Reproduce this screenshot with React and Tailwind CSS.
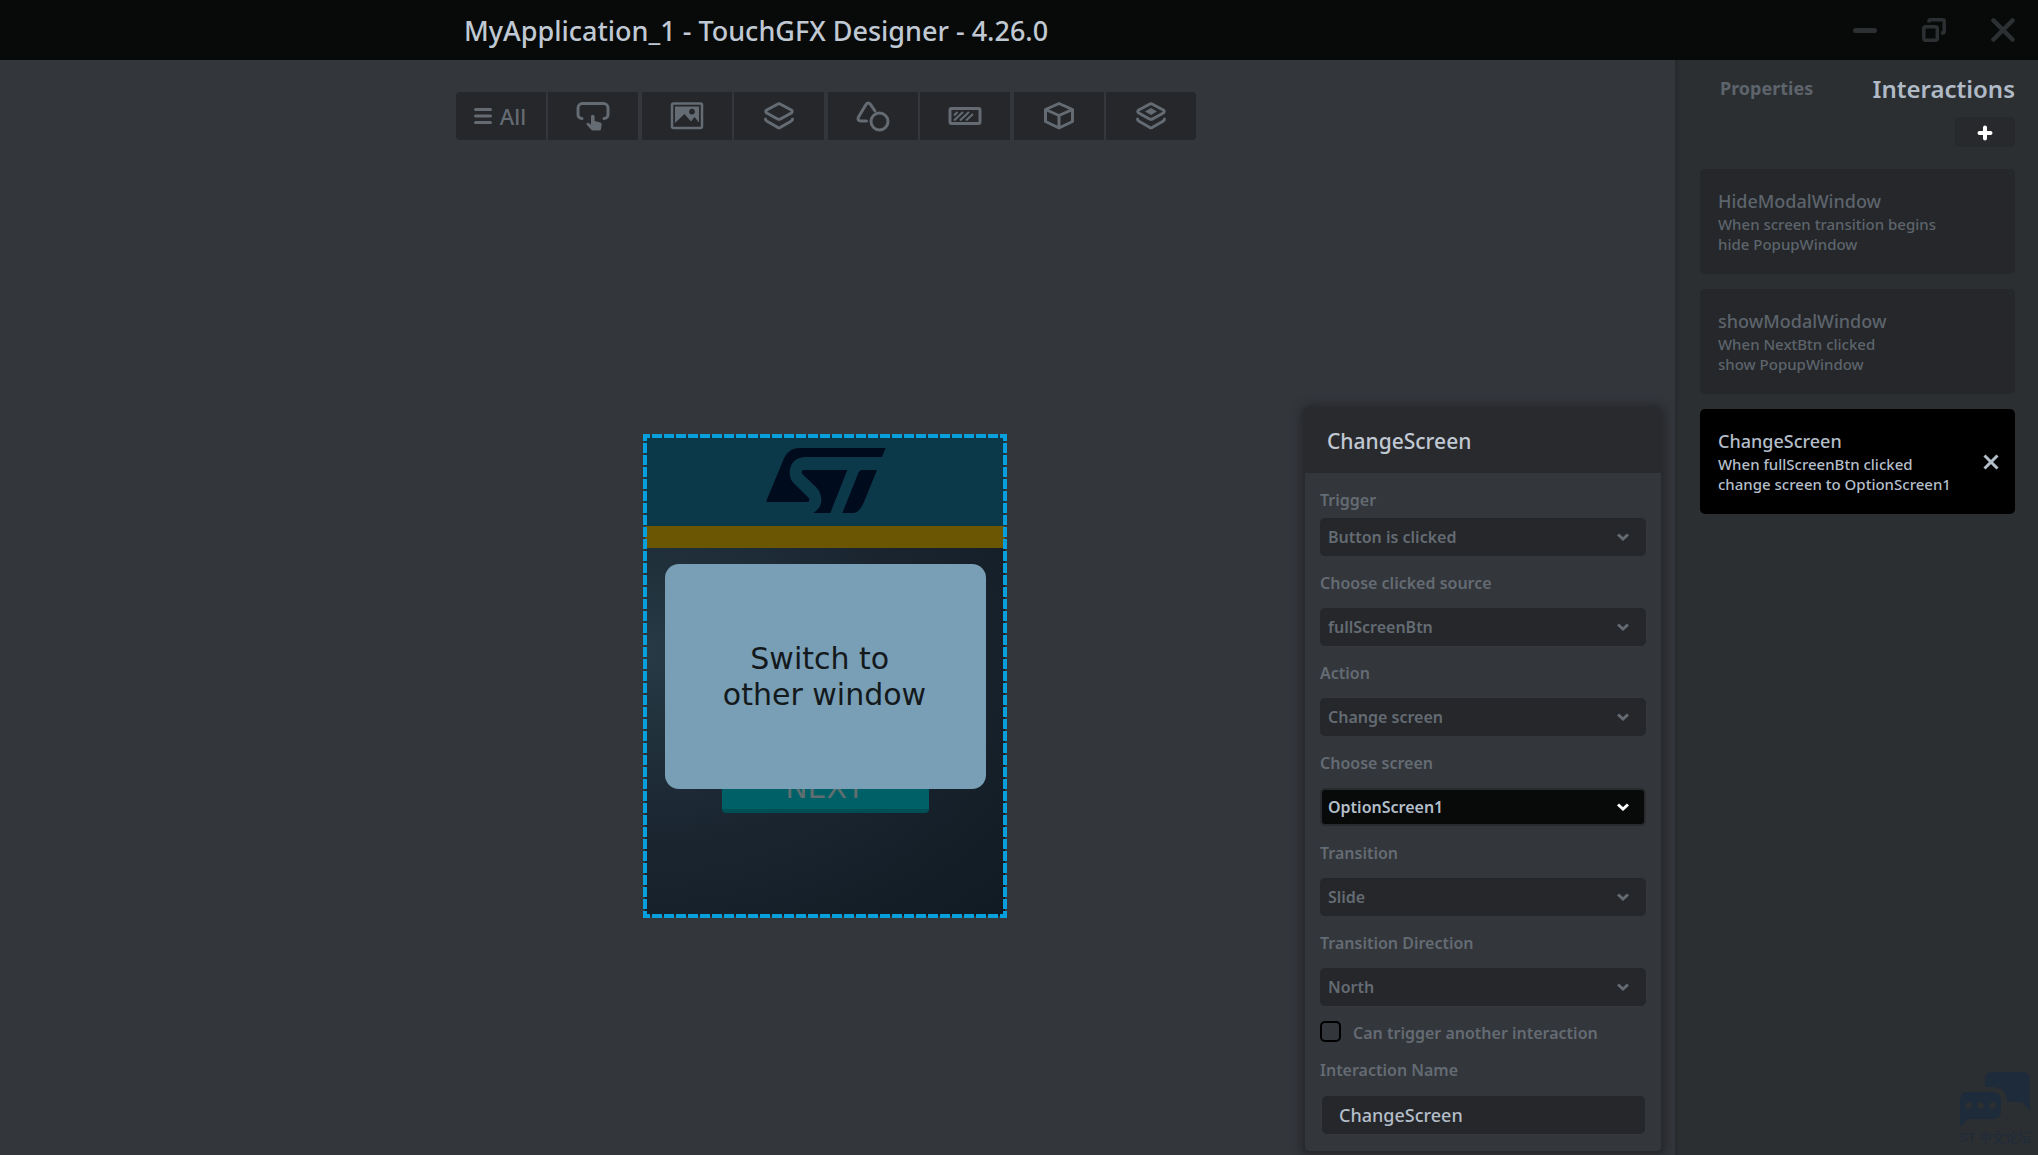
import React, { useState } from "react";

const icons = {
  touch: (
    <svg viewBox="0 0 36 32" className="h-8 w-9" fill="none" stroke="currentColor" strokeWidth="3" strokeLinecap="round">
      <path d="M7 18.500C4.500 18.500 3 16.500 3 14.500V8a4.500 4.500 0 0 1 4.500-4.500h21A4.500 4.500 0 0 1 33 8v6.500c0 2-1.500 4-4 4" />
      <path
        fill="currentColor"
        stroke="none"
        d="M16 16.500a1.800 1.800 0 0 1 3.600 0v4.500l5.600 1.600a2 2 0 0 1 1.500 2.200L26 29a1.800 1.800 0 0 1-1.800 1.500h-6.500a2 2 0 0 1-1.500-.7l-4.500-5.100c-.8-1.200.6-2.500 1.800-1.800l2.500 1.600z"
      />
    </svg>
  ),
  image: (
    <svg viewBox="0 0 36 32" className="h-8 w-9" fill="none" stroke="currentColor" strokeWidth="2.500">
      <rect x="3" y="3.500" width="30" height="24.500" rx="1.500" />
      <path fill="currentColor" stroke="none" fillRule="evenodd" d="M6 6.500h24v16l-4.500-5.500-3.500 4.500-6.500-7.500-9.500 9zM23 8.800a2.900 2.900 0 1 0 .01 0z" />
    </svg>
  ),
  layers: (
    <svg viewBox="0 0 36 32" className="h-8 w-9" fill="none" stroke="currentColor" strokeWidth="3" strokeLinejoin="round" strokeLinecap="round">
      <path d="m16.500 4.200-10.800 5.800q-1.800 1.500 0 3l10.800 6q1.500.7 3 0l10.800-6q1.800-1.500 0-3l-10.800-5.800q-1.500-.7-3 0z" />
      <path d="M4.500 19q0 1.500 1.500 2.300l10.500 6q1.500.7 3 0l10.500-6q1.500-.8 1.500-2.300" />
    </svg>
  ),
  shapes: (
    <svg viewBox="0 0 36 32" className="h-8 w-9" fill="none" stroke="currentColor" strokeWidth="3" strokeLinecap="round">
      <path d="M11.500 21H5.500q-3.500-.5-2-4L11 4.500q2-3 4.500 0l4.500 6.500" />
      <circle cx="24.500" cy="21.500" r="8.500" />
    </svg>
  ),
  progress: (
    <svg viewBox="0 0 36 32" className="h-8 w-9" fill="none" stroke="currentColor" strokeWidth="3">
      <rect x="3" y="8.500" width="30" height="15" rx="1.500" />
      <path strokeWidth="2" d="M7 15.500 10.500 12M7 20.500l9-8.500M13 20.500l9-8.500M19 20.500l7-6.500" />
    </svg>
  ),
  cube: (
    <svg viewBox="0 0 36 32" className="h-8 w-9" fill="none" stroke="currentColor" strokeWidth="3" strokeLinejoin="round">
      <path d="M18 3.500 31.500 9.500v12L18 28 4.500 21.500v-12zM4.500 9.500 18 15.500l13.500-6M18 15.500V28" />
    </svg>
  ),
  stack: (
    <svg viewBox="0 0 36 32" className="h-8 w-9" fill="none" stroke="currentColor" strokeWidth="3" strokeLinejoin="round" strokeLinecap="round">
      <path d="m16.500 4.200-10.800 5.800q-1.800 1.500 0 3l10.800 6q1.500.7 3 0l10.800-6q1.800-1.500 0-3l-10.800-5.800q-1.500-.7-3 0z" />
      <path d="M4.500 19q0 1.500 1.500 2.300l10.500 6q1.500.7 3 0l10.500-6q1.500-.8 1.500-2.300" />
      <path fill="currentColor" stroke="none" d="m18 8 6 3.500-6 3.500-6-3.500z" />
    </svg>
  ),
};

const toolGroups = [
  [{ id: "all", label: "All widgets" }, { id: "touch", label: "Buttons" }],
  [{ id: "image", label: "Images" }, { id: "layers", label: "Containers" }],
  [{ id: "shapes", label: "Shapes" }, { id: "progress", label: "Progress" }],
  [{ id: "cube", label: "Miscellaneous" }, { id: "stack", label: "Custom containers" }],
];

const interactions = [
  { name: "HideModalWindow", when: "When screen transition begins", then: "hide PopupWindow" },
  { name: "showModalWindow", when: "When NextBtn clicked", then: "show PopupWindow" },
  { name: "ChangeScreen", when: "When fullScreenBtn clicked", then: "change screen to OptionScreen1" },
];

const fields = [
  { id: "source", label: "Choose clicked source", value: "fullScreenBtn" },
  { id: "action", label: "Action", value: "Change screen" },
  { id: "screen", label: "Choose screen", value: "OptionScreen1", active: true },
  { id: "transition", label: "Transition", value: "Slide" },
  { id: "direction", label: "Transition Direction", value: "North" },
];

function TitleBar() {
  return (
    <header className="flex h-[60px] items-center justify-between bg-[#070a09] pt-0.5 pl-[464px] pr-[23px]">
      <h1 className="text-[27px] leading-9 font-medium text-[#c0c9d3]">
        MyApplication_1 - TouchGFX Designer - 4.26.0
      </h1>
      <div className="flex items-center gap-[45px] pb-0.5 text-[#2d3033]">
        <button aria-label="Minimize">
          <svg viewBox="0 0 24 24" className="size-6" stroke="currentColor" strokeWidth="5" strokeLinecap="round">
            <path d="M2.500 12.500h19" />
          </svg>
        </button>
        <button aria-label="Restore">
          <svg viewBox="0 0 24 24" className="size-6" fill="none" stroke="currentColor" strokeWidth="3.500">
            <rect x="1.800" y="8.800" width="13.500" height="13.500" rx="2" />
            <path d="M7 4.500V3.500q0-1.700 1.700-1.700h11.800q1.700 0 1.700 1.700v9.800q0 1.700-1.700 1.700H19" />
          </svg>
        </button>
        <button aria-label="Close">
          <svg viewBox="0 0 24 24" className="size-6" stroke="currentColor" strokeWidth="4.500" strokeLinecap="round">
            <path d="m2.500 2.500 19 19m0-19-19 19" />
          </svg>
        </button>
      </div>
    </header>
  );
}

function Toolbar() {
  return (
    <div className="flex justify-center pt-8 pr-[23px]">
      <nav className="flex gap-1 overflow-hidden rounded">
        {toolGroups.map((group, i) => (
          <div key={i} className="flex gap-0.5">
            {group.map((tool) => (
              <button
                key={tool.id}
                aria-label={tool.label}
                className="flex h-12 w-[90px] items-center justify-center bg-[#25272a] text-[#646b73]"
              >
                {tool.id === "all" ? (
                  <span className="flex items-center gap-2 pr-0.5 text-[22px] leading-8 font-medium">
                    <svg viewBox="0 0 18 16" className="h-4 w-[18px]" stroke="currentColor" strokeWidth="3" strokeLinecap="round">
                      <path d="M1.500 1.500h15M1.500 8h15M1.500 14.500h15" />
                    </svg>
                    All
                  </span>
                ) : (
                  icons[tool.id]
                )}
              </button>
            ))}
          </div>
        ))}
      </nav>
    </div>
  );
}

function ScreenPreview() {
  return (
    <div className="mt-[296px] mb-10 flex justify-center pr-[25px]">
      <div className="relative h-[480px] w-[360px] bg-radial-[at_0%_45%] from-[#263a45] via-[#1a2530] via-50% to-[#101a22]">
        <div className="flex h-[90px] justify-center bg-[#0c394a] pt-3 pl-0.5">
          <svg viewBox="408 84 358 195" className="h-[65px] w-[120px]" fill="#000c1e">
            <path d="M408 242 458 122Q472 84 508 84H766L755 111H525C490 111 478 138 478 158C478 175 486 185 492 191L536 235Q540 246 530 246H412Q407 246 408 242Z" />
            <path d="M520 150H651L600 279H549C566 268 573 254 573 240C573 222 566 210 556 200L516 162Q510 152 520 150Z" />
            <path d="M694 150H740L702 244Q688 279 668 279H636L684 159Q688 150 694 150Z" />
          </svg>
        </div>
        <div className="h-[22px] bg-[#6b5703]" />
        <div className="flex justify-center pt-[219px]">
          <button className="h-[46px] w-[207px] rounded border-b-4 border-[#004f55] bg-[#006067] font-['DejaVu_Sans',sans-serif] text-[30px] leading-9 text-[#5f6f70]">
            NEXT
          </button>
        </div>

        {/* Popup window */}
        <button className="absolute top-32 left-5 h-[225px] w-[321px] rounded-[14px] bg-[#789fb6] pr-0.5 font-['DejaVu_Sans',sans-serif] text-[30px] leading-9 whitespace-pre text-[#14191c]">
          {"Switch to \nother window"}
        </button>

        {/* Selection outline */}
        <svg className="pointer-events-none absolute -inset-0.5 h-[484px] w-[364px]" fill="none" stroke="#079fdc" strokeWidth="4">
          <path strokeDasharray="10 2" strokeDashoffset="3" d="M0 2H364M0 482H364M2 0V484M362 0V484" />
        </svg>
      </div>
    </div>
  );
}

function Select({ id, label, value, active, tight }) {
  return (
    <div className="flex flex-col">
      <label htmlFor={id} className={tight ? "pb-1.5 leading-6" : "pt-[15px] pb-[13px] leading-6"}>
        {label}
      </label>
      <div className="relative">
        <select
          id={id}
          defaultValue={value}
          className={
            active
              ? "h-[38px] w-full appearance-none rounded-[5px] border-2 border-[#292b2e] bg-[#070a09] px-1.5 text-[#b4bec9]"
              : "h-[38px] w-full appearance-none rounded-[5px] border-2 border-[#25272a] bg-[#25272a] px-1.5 text-[#646b73]"
          }
        >
          <option>{value}</option>
        </select>
        <svg
          viewBox="0 0 12 8"
          className={
            active
              ? "pointer-events-none absolute top-[15px] right-[17px] h-2 w-3 text-white"
              : "pointer-events-none absolute top-[15px] right-[17px] h-2 w-3"
          }
          fill="none"
          stroke="currentColor"
          strokeWidth="3"
        >
          <path d="m1 1.500 5 4.500 5-4.500" />
        </svg>
      </div>
    </div>
  );
}

function InteractionEditor() {
  const [canTrigger, setCanTrigger] = useState(false);
  const [name, setName] = useState("ChangeScreen");

  return (
    <section className="absolute right-3 bottom-0.5 w-[360px] rounded-t-lg rounded-b bg-[#292a2d] px-0.5 pb-0.5 shadow-[0_0_10px_2px_#25272a]">
      <h2 className="px-[22px] pt-5 pb-[18px] text-[21px] leading-7 font-medium text-[#c0c9d3]">ChangeScreen</h2>
      <form className="rounded-b-sm bg-[#33363b] px-[15px] pt-[15px] pb-[17px] text-base font-semibold text-[#646b73]">
        <Select id="trigger" label="Trigger" value="Button is clicked" tight />
        {fields.map((field) => (
          <Select key={field.id} {...field} />
        ))}
        <label className="flex items-start gap-3 pt-[15px] leading-6">
          <input
            type="checkbox"
            checked={canTrigger}
            onChange={(e) => setCanTrigger(e.target.checked)}
            className="size-[21px] appearance-none rounded-[5px] border-2 border-black bg-[#33363b] checked:bg-[#079fdc]"
          />
          Can trigger another interaction
        </label>
        <label htmlFor="interaction-name" className="block pt-[13px] pb-[14px] leading-6">
          Interaction Name
        </label>
        <input
          id="interaction-name"
          value={name}
          onChange={(e) => setName(e.target.value)}
          className="mx-0.5 block h-[38px] w-[323px] rounded-[5px] bg-[#25272a] px-[17px] text-lg font-medium text-[#b4bec9]"
        />
      </form>
    </section>
  );
}

function Sidebar() {
  const [selected, setSelected] = useState("ChangeScreen");

  return (
    <aside className="flex w-[363px] shrink-0 flex-col border-l-[3px] border-[#292b2e] bg-[#2c2f32] pr-[23px] pl-[22px]">
      <div className="flex items-center justify-between pt-[13px] pl-5">
        <a href="#properties" className="pb-0.5 text-lg leading-7 font-bold text-[#5d646c]">
          Properties
        </a>
        <a href="#interactions" className="text-2xl leading-8 font-semibold text-[#b0bac7]">
          Interactions
        </a>
      </div>
      <button
        aria-label="Add interaction"
        className="mt-3 flex h-[30px] w-[60px] items-center justify-center self-end rounded bg-[#27292c] pt-0.5 text-white"
      >
        <svg viewBox="0 0 16 16" className="size-4" stroke="currentColor" strokeWidth="4" strokeLinecap="round">
          <path d="M8 2.500v11M2.500 8h11" />
        </svg>
      </button>

      <ul className="mt-[22px] flex flex-col gap-[15px]">
        {interactions.map((item) => (
          <li
            key={item.name}
            className={
              item.name === selected
                ? "flex items-center rounded-[5px] bg-black pr-4 text-[#b4bec9]"
                : "flex items-center rounded-[5px] bg-[#25272a] pr-4 text-[#5d646c]"
            }
          >
            <button
              onClick={() => setSelected(item.name)}
              className="flex flex-1 flex-col pt-5 pb-5 pl-[18px] text-left text-[15px] leading-5 font-medium"
            >
              <span className="text-lg leading-[25px]">{item.name}</span>
              <span>{item.when}</span>
              <span>{item.then}</span>
            </button>
            {item.name === selected && (
              <button aria-label="Delete interaction">
                <svg viewBox="0 0 16 16" className="size-4" stroke="currentColor" strokeWidth="3">
                  <path d="m1.500 1.500 13 13m0-13-13 13" />
                </svg>
              </button>
            )}
          </li>
        ))}
      </ul>

      <div className="mt-auto -mr-4 flex w-[72px] flex-col items-center self-end pb-[7px] text-[#1e2b3b]">
        <svg viewBox="0 0 72 56" className="h-14 w-[72px]" fill="currentColor">
          <path d="M34 0H63Q71 0 71 8V39L63 30H48V29Q47 15 33 15H26V8Q26 0 34 0Z" />
          <path
            fillRule="evenodd"
            d="M8 20H34Q42 20 42 28V39Q42 47 34 47H9L1 55V28Q1 20 8 20ZM9.500 30a3.500 3.500 0 1 0 .01 0zM21.500 30a3.500 3.500 0 1 0 .01 0zM33.500 30a3.500 3.500 0 1 0 .01 0z"
          />
        </svg>
        <span className="font-['Liberation_Sans','Noto_Sans_CJK_SC',sans-serif] text-[13px] leading-5 whitespace-nowrap">
          ST 中文论坛
        </span>
      </div>
    </aside>
  );
}

export default function App() {
  return (
    <div className="flex min-h-screen flex-col bg-[#33363b] font-['Noto_Sans',sans-serif]">
      <TitleBar />
      <div className="flex flex-1">
        <main className="relative flex-1">
          <Toolbar />
          <ScreenPreview />
          <InteractionEditor />
        </main>
        <Sidebar />
      </div>
    </div>
  );
}
